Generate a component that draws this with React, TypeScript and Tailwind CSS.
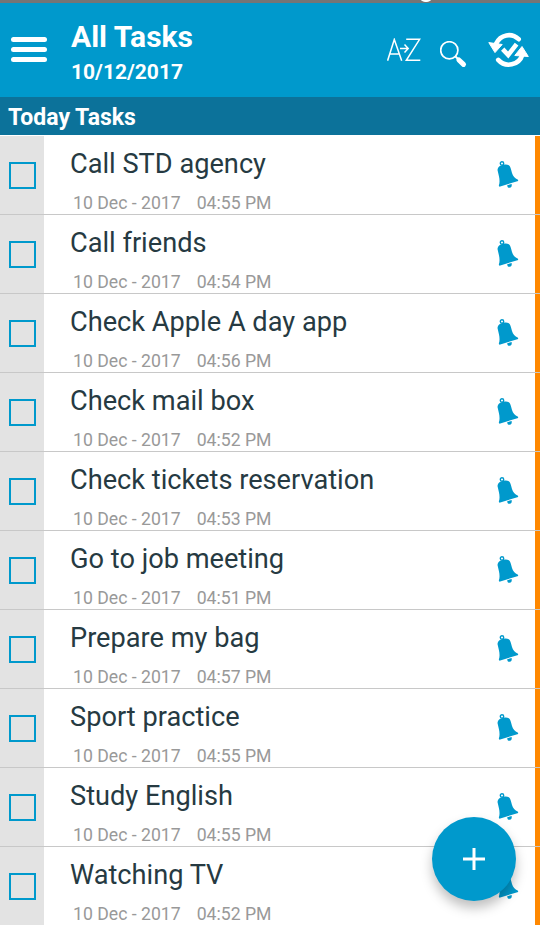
import type { ReactNode } from 'react'

type Task = {
  title: string
  date: string
  time: string
}

const tasks: Task[] = [
  { title: 'Call STD agency', date: '10 Dec - 2017', time: '04:55 PM' },
  { title: 'Call friends', date: '10 Dec - 2017', time: '04:54 PM' },
  { title: 'Check Apple A day app', date: '10 Dec - 2017', time: '04:56 PM' },
  { title: 'Check mail box', date: '10 Dec - 2017', time: '04:52 PM' },
  { title: 'Check tickets reservation', date: '10 Dec - 2017', time: '04:53 PM' },
  { title: 'Go to job meeting', date: '10 Dec - 2017', time: '04:51 PM' },
  { title: 'Prepare my bag', date: '10 Dec - 2017', time: '04:57 PM' },
  { title: 'Sport practice', date: '10 Dec - 2017', time: '04:55 PM' },
  { title: 'Study English', date: '10 Dec - 2017', time: '04:55 PM' },
  { title: 'Watching TV', date: '10 Dec - 2017', time: '04:52 PM' },
]

const BellIcon = () => (
  <svg className="block" width="22" height="28" viewBox="0 0 22 28" fill="#0099cc">
    <circle cx="5" cy="2.4" r="1.7" fill="none" stroke="#0099cc" strokeWidth="1.4" />
    <path d="M.5 9C.6 7 1.6 5.600 3.300 4.700C6 3.500 9.800 2.800 11.800 4.200C13.100 5.100 13.500 6.500 13.900 8L15 12C16 15.300 17.700 17.200 21 18.700L21.200 20L2.400 25.700L1.800 24.600C2.900 21.500 2.600 18.500 2 15.500Z" />
    <path d="M10.200 24.200L14.600 23C15.100 25 14.300 26.500 12.800 26.800C11.300 27.100 10.200 26 10.200 24.200Z" />
  </svg>
)

const SortIcon = () => (
  <svg className="block" width="34" height="24" viewBox="0 0 34 24" fill="none" stroke="#fff" strokeWidth="1.5">
    <path d="M.6 22.700L7.300 1.500L14.700 22.700M2.800 16H12.300" />
    <path d="M19.200 1.300H32.600L19.300 22.300H33.300" />
    <path d="M13 10.500H21M17.500 6.600L21.200 10.500L17.500 14.400" />
  </svg>
)

const SearchIcon = () => (
  <svg className="block" width="28" height="28" viewBox="0 0 28 28" fill="none" stroke="#fff">
    <circle cx="9.300" cy="9.300" r="8.600" strokeWidth="1.700" />
    <path d="M15.500 15.500L18.500 18.500" strokeWidth="2" />
    <path d="M18.900 19L23.500 23.400" strokeWidth="5" strokeLinecap="round" />
  </svg>
)

const SyncIcon = () => (
  <svg className="block" width="42" height="38" viewBox="0 0 42 38" fill="none" stroke="#fff">
    <path d="M8.200 12.500C12.500 3.400 23.500 1.400 30.700 8.200" strokeWidth="4.600" strokeLinecap="round" />
    <path d="M10.200 28.900C17.500 37 31 34.500 34.500 23.500" strokeWidth="4.600" strokeLinecap="round" />
    <path d="M.8 11.600L14.200 13.500L7 21.600Z" fill="#fff" strokeWidth="1" strokeLinejoin="round" />
    <path d="M26.800 24.500L34 15.500L40.300 25.500Z" fill="#fff" strokeWidth="1" strokeLinejoin="round" />
    <path d="M14.700 18.200L20.200 24L28.600 13.200" strokeWidth="4.600" />
  </svg>
)

const HeaderButton = ({ label, className, children }: { label: string; className: string; children: ReactNode }) => (
  <button type="button" aria-label={label} className={className}>
    {children}
  </button>
)

const Header = () => (
  <header className="flex h-[94px] bg-[#0099cc] text-white">
    <HeaderButton label="Menu" className="ml-[11px] mt-[34px] flex h-[25px] w-9 flex-col justify-between">
      <span className="h-[5px] w-full rounded-full bg-white" />
      <span className="h-[5px] w-full rounded-full bg-white" />
      <span className="h-[5px] w-full rounded-full bg-white" />
    </HeaderButton>
    <div className="ml-6 flex-1 pt-4">
      <h1 className="text-[30px] leading-9 font-bold">All Tasks</h1>
      <p className="text-[21px] leading-[34px] font-bold">10/12/2017</p>
    </div>
    <div className="flex items-start pr-2.5">
      <HeaderButton label="Sort" className="mt-[35px]">
        <SortIcon />
      </HeaderButton>
      <HeaderButton label="Search" className="mt-[38px] ml-[19px]">
        <SearchIcon />
      </HeaderButton>
      <HeaderButton label="Sync" className="mt-7 ml-5">
        <SyncIcon />
      </HeaderButton>
    </div>
  </header>
)

const TaskRow = ({ task }: { task: Task }) => (
  <li className="flex h-[79px] flex-col">
    <div className="flex h-[78px]">
      <div className="w-11 shrink-0 bg-[#e3e3e3] pt-[26px] pl-[9px]">
        <div className="size-[27px] border-2 border-[#0099cc]" />
      </div>
      <div className="flex-1 pl-[26px]">
        <p className="pt-2 text-[27.2px] leading-10 whitespace-nowrap text-[#263a42]">{task.title}</p>
        <p className="mt-[7px] flex gap-4 pl-[3px] text-[17.65px] leading-6 whitespace-nowrap text-[#999999]">
          <span>{task.date}</span>
          <span>{task.time}</span>
        </p>
      </div>
      <div className="mt-[25px] mr-4">
        <BellIcon />
      </div>
      <div className="w-[5px] bg-[#ff8800]" />
    </div>
    <div className="h-px bg-[#c8c8c8]" />
  </li>
)

export default function App() {
  return (
    <main className="relative h-[925px] w-[540px] overflow-hidden bg-white font-[Roboto,sans-serif]">
      <div className="flex h-[3px] items-end overflow-hidden bg-[#757575]">
        <div className="mb-px ml-[420px] h-2.5 w-3 shrink-0 rounded-full bg-white" />
      </div>
      <Header />
      <h2 className="mb-px h-[38px] bg-[#0c729a] pl-2 text-[23px] leading-[41px] font-bold text-white">Today Tasks</h2>
      <ul>
        {tasks.map((task) => (
          <TaskRow key={task.title} task={task} />
        ))}
      </ul>
      <button
        type="button"
        aria-label="Add task"
        className="absolute top-[817px] left-[432px] flex size-[84px] items-center justify-center rounded-full bg-[#0099cc] shadow-[0_7px_12px_rgba(0,0,0,0.25)]"
      >
        <svg width="22" height="22" viewBox="0 0 22 22" stroke="#fff" strokeWidth="3">
          <path d="M11 0V22M0 11H22" />
        </svg>
      </button>
    </main>
  )
}
